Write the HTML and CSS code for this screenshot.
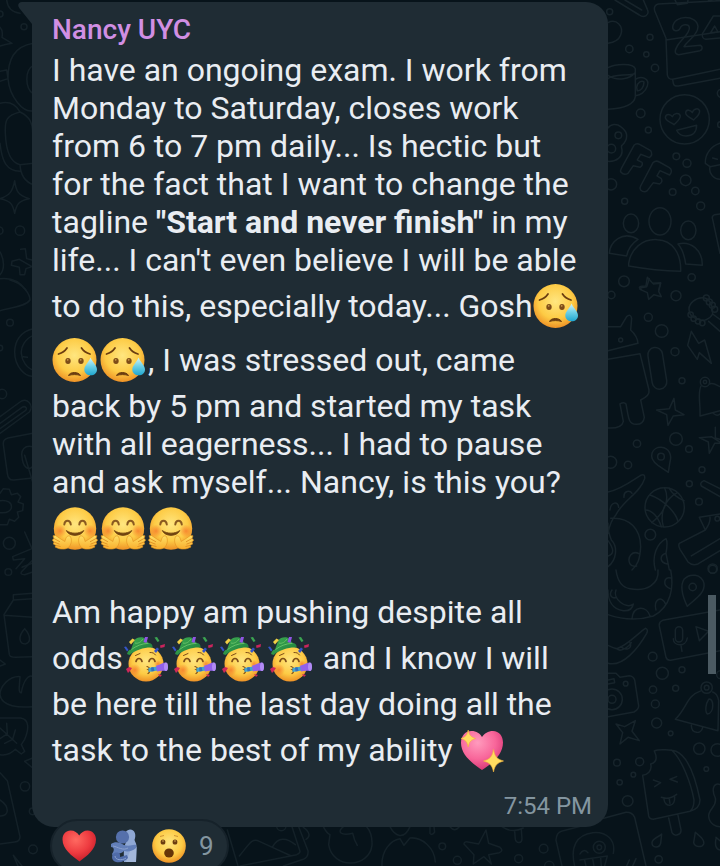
FILE: index.html
```html
<!DOCTYPE html>
<html lang="en">
<head>
<meta charset="utf-8">
<meta name="viewport" content="width=device-width, initial-scale=1">
<title>Chat</title>
<link rel="stylesheet" href="styles.css">
</head>
<body>

<!-- Emoji symbols shared by the message and the reactions -->
<svg class="sprite" aria-hidden="true">
  <defs>
    <radialGradient id="skin" cx=".5" cy=".4" r=".6">
      <stop offset="0" stop-color="#ffe680"/><stop offset=".65" stop-color="#fdcb45"/><stop offset="1" stop-color="#ee9226"/>
    </radialGradient>
    <radialGradient id="blush"><stop offset="0" stop-color="#f5732a" stop-opacity=".75"/><stop offset="1" stop-color="#f5732a" stop-opacity="0"/></radialGradient>
    <linearGradient id="tear" x1="0" y1="0" x2="0" y2="1"><stop offset="0" stop-color="#d5f5fb"/><stop offset=".5" stop-color="#6ccfe6"/><stop offset="1" stop-color="#1fa6ce"/></linearGradient>
    <linearGradient id="hands" x1="0" y1="0" x2="0" y2="1"><stop offset="0" stop-color="#ffe066"/><stop offset="1" stop-color="#f9ae2d"/></linearGradient>
    <radialGradient id="pink" cx=".4" cy=".3" r=".7"><stop offset="0" stop-color="#ff9bbd"/><stop offset=".6" stop-color="#f8669a"/><stop offset="1" stop-color="#d93a78"/></radialGradient>
    <radialGradient id="red" cx=".4" cy=".3" r=".7"><stop offset="0" stop-color="#ff6a61"/><stop offset=".6" stop-color="#ee3b40"/><stop offset="1" stop-color="#c81f2b"/></radialGradient>
    <linearGradient id="hat" x1="0" y1="0" x2="1" y2="1"><stop offset="0" stop-color="#3fae52"/><stop offset="1" stop-color="#1b7a3b"/></linearGradient>
  </defs>

  <symbol id="sad" viewBox="0 0 48 54">
    <circle cx="22.500" cy="27" r="22" fill="url(#skin)"/>
    <g fill="none" stroke="#6b3d10" stroke-width="1.800" stroke-linecap="round">
      <path d="M6.500 21C10 20 13 18 15 15"/><path d="M29.500 15C31.500 18 34.500 20 38 21"/>
    </g>
    <path d="M16.500 42.500C18 38.500 26.500 38.500 28.500 42.500C25.500 41.300 19.500 41.300 16.500 42.500Z" fill="#6b3d10" stroke="#6b3d10"/>
    <ellipse cx="16" cy="28" rx="2.700" ry="3" fill="#7d4c18"/><ellipse cx="29" cy="28" rx="2.700" ry="3" fill="#7d4c18"/>
    <circle cx="15.700" cy="26.800" r=".9" fill="#c99a4a"/><circle cx="28.700" cy="26.800" r=".9" fill="#c99a4a"/>
    <path d="M38.500 24.500C40.500 29 45 32.500 45 36.500C45 40 42.300 42.300 38.700 42.300C35.200 42.300 32.300 40 32.300 36.500C32.300 32.500 36.800 29 38.500 24.500Z" fill="url(#tear)"/>
  </symbol>

  <symbol id="hug" viewBox="0 0 48 54">
    <circle cx="23" cy="27.500" r="21.200" fill="url(#skin)"/>
    <circle cx="8" cy="30" r="6.500" fill="url(#blush)"/><circle cx="38" cy="30" r="6.500" fill="url(#blush)"/>
    <g fill="none" stroke="#8a5a20" stroke-width="2" stroke-linecap="round">
      <path d="M12.300 23.500C12.800 18.500 18.200 18.500 18.800 23.500"/><path d="M27.300 23.500C27.800 18.500 33.200 18.500 33.800 23.500"/>
    </g>
    <path d="M14.300 29.500C19 33 27 33 31.800 29.500C29 36 17 36 14.300 29.500Z" fill="#70430f" stroke="#70430f" stroke-width=".8" stroke-linejoin="round"/>
    <g id="palm">
      <path d="M18 35C20 38 20 42 17 46C14.500 48.500 10 48.500 6.500 47.500L3 46L4 44.500L1.300 43L2 41L.3 39L2 37.500L1 34.800L3.500 34.500L9.500 38.500L13 40.500C13.500 37 15 34 18 35Z" fill="url(#hands)" stroke="#e2921f" stroke-width=".6" stroke-linejoin="round"/>
      <path d="M2 37.500L8 40.800M2 41L7.500 43.200M4 44.500L8.500 45.500" fill="none" stroke="#dc861d" stroke-width=".8"/>
    </g>
    <use href="#palm" transform="matrix(-1 0 0 1 46 0)"/>
  </symbol>

  <symbol id="party" viewBox="0 0 48 54">
    <circle cx="23" cy="33" r="17.500" fill="url(#skin)"/>
    <circle cx="12" cy="39" r="6" fill="url(#blush)"/><circle cx="35" cy="33" r="4" fill="url(#blush)"/>
    <path d="M4 23C5 20 6 19 8 18.500L11.500 9C13 6.500 19 5 22 7.500L25.500 12C28 12 30 14 29.500 16.500C22 16 13 18.500 6.500 24Z" fill="url(#hat)"/>
    <path d="M8.500 18.500C13 15 19 12.500 25.500 12.300M12 12C15 13 18 11 20 8" fill="none" stroke="#6ac46a" stroke-width=".9"/>
    <path d="M6 11L9.500 7.500L12 9L8 13.500Z" fill="#f0cf45"/><path d="M20.500 11L22 6L25 6L23.500 12Z" fill="#9054e4"/>
    <path d="M31.500 6.500L34 6L36.500 10L34.500 11Z" fill="#3ba451"/><path d="M31 20L34 16.500L36 18L33 22Z" fill="#3554c9"/>
    <path d="M37 14.500L42 13L41.500 16L37.500 17Z" fill="#c9245c"/><path d="M1 16L3 15.500L5.500 19L4 20.500Z" fill="#3554c9"/>
    <path d="M3 38L6 36L9 37L7 40L5 42Z" fill="#cf2859"/><path d="M35 43L39 44L37 46Z" fill="#cf2859"/>
    <g fill="none" stroke="#7d4c18" stroke-linecap="round">
      <path d="M13 30.500C14 26.500 18 26.500 19 30.500M26 30.500C27 26.500 31 26.500 32 30.500" stroke-width="1.700"/>
      <path d="M12.500 24.500L17 22.500M27 21.500C30 21.500 31 22 32.500 24" stroke-width="1"/>
      <path d="M24 35.500C27 36.500 27 38 25 38.500C27 39.500 27 41.500 25 42.500" stroke-width="1.200"/>
    </g>
    <path d="M25.500 37L34 35.500L35 39.500L25.500 41Z" fill="#43a5cf"/><path d="M28 36.500L30.500 36L31.500 40L28.500 40.500Z" fill="#356fbd"/>
    <path d="M33 34.500C36 34.500 38 32 42.500 31.500C45 33 45.500 38 43.500 40C39 39.500 37 39.500 34 40.500Z" fill="#9261eb"/>
    <ellipse cx="43" cy="35.700" rx="2" ry="4.200" fill="#b28bf5"/>
  </symbol>

  <symbol id="sparkle-heart" viewBox="0 0 48 54">
    <path d="M22 47C13 41 1 32 1 20C1 12.500 5.500 8 11.500 8C16.500 8 20 10.500 22 14C24.500 10.500 28 8 33 8C39 8 43 13 43 19.500C43 32 31.500 41 22 47Z" fill="url(#pink)"/>
    <path d="M8.200 7C9.300 12.500 11 14 15.500 15.500C11 17 9.300 18.500 8.200 24C7 18.500 5.500 17 1 15.500C5.500 14 7 12.500 8.200 7Z" fill="#ffdd60" stroke="#f3b13a" stroke-width=".6"/>
    <path d="M33.500 26.500C35 34 37 36 43.500 38C37 40 35 42 33.500 49C32 42 30 40 23.500 38C30 36 32 34 33.500 26.500Z" fill="#ffdd60" stroke="#f3b13a" stroke-width=".6"/>
  </symbol>

  <symbol id="red-heart" viewBox="0 0 34 34">
    <path d="M17.500 32.500C10 27 .5 20 .5 10.500C.5 5 4 1.500 8.500 1.500C12.500 1.500 15.500 3.500 17.200 6.500C19 3.500 22 1.500 25.800 1.500C30.500 1.500 34 5.500 34 10.500C34 20 25 27 17.500 32.500Z" fill="url(#red)"/>
  </symbol>

  <symbol id="embrace" viewBox="0 0 34 34">
    <path d="M17 33C17 25 16 20 19 13C16 7 18 1 23 .5C28 .5 29.500 6 27.500 11C28.500 14 30 15 29.500 20L29 33Z" fill="#8fa8d4"/>
    <path d="M19 33L23 22L29.500 18L29 33Z" fill="#a3b7da"/>
    <circle cx="15.500" cy="8" r="6.600" fill="#5570ab"/>
    <path d="M4 15C8 12 13 13 17 16C23 18 26 15 29 16L29 19C26 22 21 23 17 22C13 26 9 24 6 27L5 25C8 21 7 18 4 18Z" fill="#627fb9"/>
    <path d="M6 25C10 22 14 24 13 28L20 26L21 29C18 32 14 34 9 33C5 32 4 28 6 25Z" fill="#506ca9"/>
    <path d="M6 17C11 18 16 22 21 19M8 27C8 31 15 32 19 29" fill="none" stroke="#8ba2cf"/>
  </symbol>

  <symbol id="wow" viewBox="0 0 34 34">
    <circle cx="17" cy="17" r="16.800" fill="url(#skin)"/>
    <ellipse cx="11" cy="13" rx="2.400" ry="2.600" fill="#6b3d10"/><ellipse cx="23" cy="13" rx="2.400" ry="2.600" fill="#6b3d10"/>
    <circle cx="11" cy="12" r=".8" fill="#d8aa55"/><circle cx="23" cy="12" r=".8" fill="#d8aa55"/>
    <path d="M8 7.500L12 6.500M22 6.500L26 7.500" stroke="#d19332" fill="none"/>
    <ellipse cx="17" cy="24" rx="4.800" ry="4.600" fill="#663508"/>
  </symbol>
</svg>

<main class="chat">
  <!-- Doodle wallpaper -->
  <svg class="wallpaper" viewBox="0 0 720 866" preserveAspectRatio="xMidYMin slice" aria-hidden="true">
    <g transform="translate(600 0) scale(.3333)">
      <path d="M45 0L118 45C132 55 150 45 142 28L130 0M75 0L125 30"/>
      <path d="M225 0L232 14L262 10L264 0M325 0L340 4L360 0M360 2L175 12Q160 16 164 32L198 115L202 225Q204 238 218 238L360 208M198 120L360 95M218 238L220 250Q222 260 235 258L360 235"/>
      <path d="M218 82C222 42 292 44 294 80C294 105 260 125 252 140L302 136C310 142 306 150 300 152L236 164C220 162 226 148 232 138C244 118 272 98 268 82C266 70 244 72 240 86C234 96 218 94 218 82Z"/>
      <path d="M360 48L340 48L308 100Q304 116 318 118L360 114M344 78L332 98L354 96Z"/>
      <path d="M24 68C50 55 72 80 62 105C55 124 38 128 24 130M24 203C50 190 100 190 106 206L106 290C102 318 60 326 24 328M24 226C54 246 90 236 105 218M24 236C40 222 70 228 103 222M106 238C125 226 150 236 142 258C136 276 120 288 106 286M110 262C112 246 126 240 132 246C132 262 122 274 112 272Z"/>
      <circle cx="254" cy="358" r="74"/>
      <path d="M222 374C210 366 196 362 196 352C198 340 212 342 217 350C221 340 238 336 241 348C240 360 230 366 222 374ZM281 360C270 352 256 348 257 338C259 326 273 330 277 338C280 326 296 322 299 333C299 346 288 352 281 360ZM230 391L290 376C290 398 276 408 258 408C244 408 234 400 230 391Z"/>
      <path d="M24 384C32 372 50 370 62 380C82 394 86 410 72 430C66 438 62 432 66 450C68 470 50 486 24 484"/>
      <circle cx="55" cy="406" r="10"/><circle cx="34" cy="446" r="13"/>
      <path d="M102 436Q110 428 120 434L152 452Q160 464 148 473L122 463L112 480L126 487Q130 496 120 502L100 497L84 520Q72 527 63 517Q60 512 64 505ZM159 488Q168 480 178 486L208 503Q220 512 209 525L180 512L171 528L184 536Q189 546 179 552L160 548L142 572Q132 580 122 570Q118 564 122 558Z"/>
      <path d="M360 430C330 440 315 465 316 490L330 500L360 494M330 500C325 520 342 538 360 538M338 474L352 478"/>
      <ellipse cx="180" cy="664" rx="33" ry="41"/><ellipse cx="93" cy="670" rx="23" ry="28"/><ellipse cx="265" cy="691" rx="23" ry="28"/>
      <path d="M86 790C92 748 126 716 172 719C218 720 244 762 242 814Q166 812 86 798ZM80 768L28 760C30 726 66 690 114 718C96 730 84 744 80 768ZM234 732C272 722 308 750 307 796L257 792C254 770 250 750 234 732Z"/>
      <path d="M360 642L344 644Q334 648 338 658L360 760M124 868C112 862 120 858 138 858L142 832L158 850L182 848L176 870"/>
      <circle cx="29" cy="35" r="9"/><circle cx="150" cy="112" r="9"/><circle cx="88" cy="147" r="11"/><circle cx="139" cy="163" r="8"/><circle cx="165" cy="204" r="11"/><circle cx="122" cy="340" r="13"/><circle cx="145" cy="390" r="9"/><circle cx="229" cy="469" r="10"/><circle cx="261" cy="490" r="12"/><circle cx="257" cy="541" r="16"/><circle cx="218" cy="576" r="10"/><circle cx="286" cy="573" r="11"/><circle cx="302" cy="618" r="12"/><circle cx="74" cy="604" r="9"/><circle cx="33" cy="553" r="17"/><circle cx="275" cy="832" r="11"/><circle cx="364" cy="280" r="12"/><circle cx="362" cy="374" r="9"/>
    </g>

    <g transform="translate(600 280) scale(.3333)">
      <path d="M120 24L140 20L148 -4M160 12L182 10L176 34L184 50L162 44L146 58L142 38L120 28"/>
      <path d="M24 140L62 140L80 110Q92 100 95 115L92 150Q112 168 114 190L24 212M24 238L120 221L147 330Q150 348 122 360L133 412Q130 434 108 433C84 432 86 412 78 372Q72 364 60 372L70 424Q66 446 24 444"/>
      <rect x="150" y="202" width="44" height="126" rx="22" transform="rotate(-9 172 265)"/>
      <circle cx="62" cy="180" r="6"/>
      <path d="M268 94C262 70 290 50 314 54C336 60 338 84 338 102C328 120 310 124 294 118C276 112 268 104 268 94ZM338 102L360 118M326 124L360 154M274 154L296 190L314 180L334 250L298 218L292 238L263 196Z"/>
      <g><circle cx="272" cy="104" r="8"/><circle cx="281" cy="116" r="8"/><circle cx="294" cy="124" r="8"/><circle cx="307" cy="129" r="8"/><circle cx="319" cy="54" r="9"/><circle cx="328" cy="66" r="9"/><circle cx="337" cy="76" r="9"/><circle cx="344" cy="88" r="9"/></g>
      <path d="M222 355L226 390L252 404L220 408L204 436L200 404L170 390L208 386ZM346 442L346 474L366 480M366 490L344 490L328 520L325 486L298 473L334 470Z"/>
      <circle cx="315" cy="306" r="14"/><circle cx="315" cy="306" r="5"/>
      <path d="M303 318C292 340 302 370 300 408L360 392M328 312C342 306 350 316 360 320M340 400Q350 410 360 402"/>
      <path d="M205 577L174 556C138 530 160 500 184 502C208 504 216 526 210 546Z"/><circle cx="183" cy="530" r="10"/>
      <circle cx="194" cy="682" r="59"/>
      <path d="M150 645C194 660 228 700 234 724M194 624C206 650 204 690 155 728M232 638C190 660 180 704 190 740M136 690C156 690 174 710 184 740M208 625C218 644 234 654 252 662"/>
      <path d="M24 636C60 630 100 600 122 586Q136 580 134 596C120 640 70 660 48 704Q30 724 24 760M32 715C90 710 122 750 122 800C120 840 112 856 96 870M24 860C50 840 54 800 34 780Q22 750 24 730M24 782Q52 820 24 828M72 652C70 632 90 630 96 640M30 690C32 668 54 660 56 682M118 822C98 810 80 830 90 852Q96 862 110 858M166 870C154 826 172 790 198 776Q204 786 198 820L208 870M198 820C178 826 178 848 202 852"/>
      <path d="M360 702L298 712L316 750L238 790Q234 796 240 808L264 846Q276 858 294 852L360 812M330 712C332 728 322 742 316 750M274 828L360 776M360 650L304 618Q298 608 312 602L360 626"/><circle cx="352" cy="716" r="7"/>
      <circle cx="72" cy="4" r="16"/><circle cx="34" cy="45" r="11"/><circle cx="228" cy="47" r="15"/><circle cx="145" cy="112" r="12"/><circle cx="185" cy="153" r="19"/><circle cx="225" cy="215" r="12"/><circle cx="246" cy="302" r="9"/><circle cx="228" cy="477" r="19"/><circle cx="111" cy="491" r="11"/><circle cx="267" cy="507" r="10"/><circle cx="84" cy="555" r="11"/><circle cx="32" cy="547" r="18"/><circle cx="306" cy="569" r="9"/><circle cx="268" cy="611" r="9"/><circle cx="297" cy="665" r="10"/><circle cx="151" cy="764" r="16"/><circle cx="338" cy="866" r="14"/>
    </g>

    <g transform="translate(600 570) scale(.3333)">
      <path d="M48 0C52 30 62 52 90 56C140 66 178 42 174 0M24 134C70 150 120 150 160 138C214 110 222 50 212 0M48 60C36 86 80 120 100 102Q96 124 70 122C36 118 24 90 24 60M50 82C34 88 26 74 36 60M212 24C192 18 186 46 210 56M198 104C184 72 160 90 168 120M96 146C100 106 140 106 150 138"/>
      <path d="M262 109C248 80 238 50 252 28C270 8 304 12 312 40C316 70 286 86 262 109Z"/><circle cx="278" cy="51" r="11"/>
      <path d="M360 120L188 151Q176 156 178 168L198 262Q202 274 216 270L360 242"/>
      <rect x="226" y="170" width="22" height="46" rx="11"/><path d="M220 206C220 230 258 232 262 204M243 226L246 244M288 170L326 184L298 212Z"/>
      <path d="M24 226Q42 234 50 236C80 228 116 188 136 175Q146 178 140 190C116 232 70 292 24 280M50 236C56 244 76 242 94 218M62 230C78 244 98 236 90 218"/>
      <path d="M24 310L48 310L60 322L88 317Q100 318 104 330L116 408Q116 418 102 426L24 440"/><circle cx="36" cy="388" r="12"/><circle cx="36" cy="388" r="31"/><circle cx="77" cy="341" r="7"/><path d="M24 330L42 326L44 338L24 342"/>
      <path d="M48 462L74 470L106 452L96 484L118 512L84 502L60 522L68 488Z"/>
      <circle cx="320" cy="353" r="17"/><circle cx="320" cy="353" r="7"/>
      <path d="M304 362C258 378 264 410 226 448L354 482L356 392Q352 370 338 366M274 466C274 492 304 494 308 472M326 388C342 382 344 430 322 432Q314 424 320 400Z"/>
      <path d="M163 543C176 536 216 540 228 544C266 560 288 630 300 690C300 712 284 720 270 724L160 748Q148 748 146 738L128 616C140 614 158 604 152 582C176 576 168 554 163 543ZM214 540C246 566 274 644 282 690Q282 714 270 724M206 744L216 788C224 802 244 794 243 780L234 736"/>
      <path d="M160 630L182 638L164 650M230 620L210 628L232 636M184 682Q208 690 230 673M192 688C194 712 226 714 224 680M208 688L210 700"/>
      <path d="M360 644C340 636 334 660 346 684C352 710 326 716 326 738C328 764 350 770 360 770"/>
      <path d="M185 792L182 820C178 836 156 834 156 818C158 804 176 802 185 792ZM286 787C300 800 314 808 311 822C306 834 284 832 281 818ZM348 802L360 812M348 806C344 826 348 838 360 840"/>
      <path d="M0 748L78 727Q96 726 104 742L138 888M88 870L80 888M108 866L98 888"/>
      <circle cx="338" cy="-2" r="12"/><circle cx="158" cy="260" r="13"/><circle cx="187" cy="310" r="18"/><circle cx="246" cy="299" r="9"/><circle cx="159" cy="359" r="11"/><circle cx="227" cy="355" r="9"/><circle cx="166" cy="402" r="12"/><circle cx="170" cy="459" r="15"/><circle cx="212" cy="490" r="7"/><circle cx="298" cy="536" r="17"/><circle cx="352" cy="540" r="19"/><circle cx="319" cy="597" r="7"/><circle cx="51" cy="578" r="10"/><circle cx="119" cy="575" r="12"/><circle cx="100" cy="614" r="7"/><circle cx="59" cy="637" r="8"/><circle cx="83" cy="693" r="16"/><circle cx="176" cy="868" r="11"/><circle cx="362" cy="314" r="12"/>
    </g>

    <g class="dim" transform="scale(.3333)">
      <path d="M20 0Q24 36 60 40M0 82Q10 92 6 112L36 130Q14 134 0 138M100 130C40 140 24 180 24 236C28 290 70 340 100 332M100 196C74 210 74 264 100 282M0 214L20 210L24 236L0 244M0 310Q40 300 60 336C20 346 14 360 16 400C18 450 30 488 60 494L100 490M60 336C90 350 98 370 98 400M0 430C6 486 20 512 60 514M60 494C62 530 76 546 100 554"/>
      <path d="M44 542C48 574 54 586 88 596C56 602 50 612 44 640C38 610 30 602 0 596C30 586 38 574 44 542ZM62 748L76 746L80 776L96 780M96 800L78 806L74 824L60 824L58 802L34 796L36 784L58 778ZM0 756C14 780 14 810 0 824M0 836Q50 830 78 870"/>
      <circle cx="72" cy="80" r="9"/><circle cx="0" cy="42" r="9"/><circle cx="60" cy="692" r="14"/><circle cx="-2" cy="692" r="11"/>
    </g>
    <g class="dim" transform="translate(0 280) scale(.3333)">
      <path d="M30 0C70 10 90 44 90 60C76 80 30 84 0 92M100 146C60 154 44 186 44 216C44 260 76 292 100 288M100 166C76 176 62 200 64 220C66 244 80 264 100 270M70 230L82 232M0 410L60 366C80 350 104 376 88 396L0 460M0 430L66 382C76 376 84 386 76 392L0 446M98 460L24 474Q8 478 10 494L22 580Q24 602 42 600L98 594M98 500C74 494 62 510 66 530C68 560 84 574 98 560M74 526L98 606"/>
      <path d="M0 640L10 626L28 628L34 644L52 640L62 650L54 666L70 672L68 692L52 696L56 712L44 724L28 718L22 734L0 734M0 662C46 656 46 704 0 698"/><path d="M74 756L96 806M96 806L38 830L40 840L74 836L48 866M66 862L96 850"/>
      <circle cx="30" cy="128" r="10"/><circle cx="6" cy="342" r="14"/><circle cx="0" cy="204" r="8"/><circle cx="28" cy="790" r="18"/>
    </g>
    <g class="dim" transform="translate(0 560) scale(.3333)">
      <path d="M98 0L64 36Q60 44 74 44L98 36M98 100L40 104L40 120L98 116M40 120L12 164L28 284Q30 292 46 292L98 290M12 166L98 172M74 206C54 228 56 252 76 252C94 248 92 226 74 206Z"/>
      <path d="M98 350C88 342 70 360 64 398Q56 400 58 378L60 350C26 348 0 380 0 404C4 440 60 444 98 440M0 474L62 474C90 478 86 510 74 538L64 554L74 574L64 582L46 568C26 588 10 586 0 584M0 504L50 550M20 490L22 522L0 536M46 510L38 538L14 550M98 594L74 604L98 624M0 638L22 662L60 830Q60 844 44 846L0 852M0 720C30 740 28 770 0 768M0 300L16 312L0 318M40 886L54 918M40 886L66 918"/>
      <circle cx="25" cy="36" r="10"/><circle cx="75" cy="679" r="14"/><circle cx="98" cy="754" r="10"/><circle cx="99" cy="868" r="13"/>
    </g>
    <g class="dim" transform="translate(220 820) scale(.3333)">
      <path d="M22 30L54 138M24 74L0 90M58 108C88 72 96 52 118 64L214 108M158 80C174 50 200 52 226 74M216 20L240 94Q240 100 230 104L60 138M236 20L264 92Q266 112 250 118L190 138M250 22C270 36 272 50 258 58M310 20Q320 40 330 44L326 74C338 150 448 144 456 76Q458 40 440 20M370 20C350 36 362 48 398 40L404 60L412 76M510 20C524 48 552 62 570 20M486 138C484 92 512 60 540 56L552 76L570 54C606 50 644 84 646 126M630 20L630 40Q636 48 644 36L642 20M690 20Q704 38 718 20M798 30L806 70L840 82Q852 92 838 98L806 104L814 132L792 110L760 132L762 104L732 72Q732 64 744 66L776 72ZM846 20C866 34 890 34 910 24M884 32L886 58C890 72 906 70 906 56L904 28M1026 138L1008 60Q1010 38 1024 34L1140 4M1180 100C1188 60 1160 34 1118 38C1070 44 1050 80 1064 138M1080 102Q1090 84 1104 98M1080 120L1162 108L1154 138M1094 120L1098 138M1118 116L1122 138M1142 112L1144 138"/>
      <circle cx="667" cy="79" r="10"/><circle cx="712" cy="121" r="12"/><circle cx="971" cy="86" r="13"/><circle cx="896" cy="116" r="12"/><circle cx="988" cy="138" r="14"/><circle cx="1138" cy="82" r="18"/><circle cx="1138" cy="82" r="7"/><circle cx="184" cy="18" r="14"/>
    </g>
  </svg>

  <article class="message">
    <svg class="tail" viewBox="0 0 16 24" aria-hidden="true"><path d="M16 0H4C0 0-1 4 2 7L14 22V24H16Z"/></svg>
    <h2 class="sender">Nancy UYC</h2>
    <p class="text">I have an ongoing exam. I work from Monday to Saturday, closes work from 6 to 7 pm daily... Is hectic but for the fact that I want to change the tagline <strong>"Start and never finish"</strong> in my life... I can't even believe I will be able to do this, especially today... Gosh<svg class="emoji" role="img" aria-label="😥"><use href="#sad"/></svg><svg class="emoji" role="img" aria-label="😥"><use href="#sad"/></svg><svg class="emoji" role="img" aria-label="😥"><use href="#sad"/></svg>, I was stressed out, came back by 5 pm and started my task with all eagerness... I had to pause and ask myself... Nancy, is this you?<br><svg class="emoji" role="img" aria-label="🤗"><use href="#hug"/></svg><svg class="emoji" role="img" aria-label="🤗"><use href="#hug"/></svg><svg class="emoji" role="img" aria-label="🤗"><use href="#hug"/></svg></p>
    <p class="text">Am happy am pushing despite all odds<svg class="emoji" role="img" aria-label="🥳"><use href="#party"/></svg><svg class="emoji" role="img" aria-label="🥳"><use href="#party"/></svg><svg class="emoji" role="img" aria-label="🥳"><use href="#party"/></svg><svg class="emoji" role="img" aria-label="🥳"><use href="#party"/></svg> and I know I will be here till the last day doing all the task to the best of my ability <svg class="emoji" role="img" aria-label="💖"><use href="#sparkle-heart"/></svg></p>
    <time class="time" datetime="19:54">7:54 PM</time>
  </article>

  <button class="reactions" type="button">
    <svg class="reaction" role="img" aria-label="❤️"><use href="#red-heart"/></svg>
    <svg class="reaction" role="img" aria-label="🫂"><use href="#embrace"/></svg>
    <svg class="reaction" role="img" aria-label="😮"><use href="#wow"/></svg>
    <span class="count">9</span>
  </button>

  <div class="scroll-thumb"></div>
</main>
</body>
</html>
```

FILE: styles.css
```css
:root {
  --wall: #07131a;
  --bubble: #1f2c34;
  --text: #e9edf2;
  --muted: #8496a0;
}

* {
  box-sizing: border-box;
}

body {
  margin: 0;
  background: var(--wall);
  color: var(--text);
  font-family: Roboto, "Noto Sans", sans-serif;
}

.sprite {
  position: absolute;
  width: 0;
  height: 0;
}

.chat {
  position: relative;
  height: 100vh;
  overflow: hidden;
  padding: 2px 112px 0 32px;
}

.wallpaper {
  position: absolute;
  inset: 0;
  width: 100%;
  height: 100%;
  fill: none;
  stroke: #17242b;
  stroke-width: 4.5;
  stroke-linecap: round;
  stroke-linejoin: round;
}

.dim {
  stroke: #142128;
}

.message {
  position: relative;
  display: flex;
  flex-direction: column;
  padding: 12px 16px 7px 20px;
  border-radius: 0 22px 22px 22px;
  background: var(--bubble);
}

.tail {
  position: absolute;
  top: 0;
  left: -14px;
  width: 16px;
  height: 24px;
  fill: var(--bubble);
}

.sender {
  margin: 0 0 5px;
  color: #d18fe3;
  font-size: 28px;
  font-weight: 500;
  line-height: 32px;
}

.text {
  margin: 0 8px 38px 0;
  font-size: 32px;
  line-height: 38px;
}

.text:last-of-type {
  margin-bottom: 15px;
}

.emoji {
  width: 48px;
  height: 54px;
  vertical-align: -16px;
}

.time {
  align-self: flex-end;
  color: var(--muted);
  font-size: 24px;
  line-height: 28px;
}

.reactions {
  position: relative;
  display: flex;
  align-items: center;
  gap: 11px;
  height: 54px;
  margin: -8px 0 0 18px;
  padding: 0 13px 0 10px;
  width: max-content;
  border: 2px solid #16222a;
  border-radius: 27px;
  background: var(--bubble);
  color: var(--muted);
  font: inherit;
  font-size: 26px;
}

.reaction {
  width: 34px;
  height: 34px;
}

.count {
  padding-left: 2px;
}

.scroll-thumb {
  position: absolute;
  top: 595px;
  right: 4px;
  width: 8px;
  height: 79px;
  background: #4b5a62;
}
```
